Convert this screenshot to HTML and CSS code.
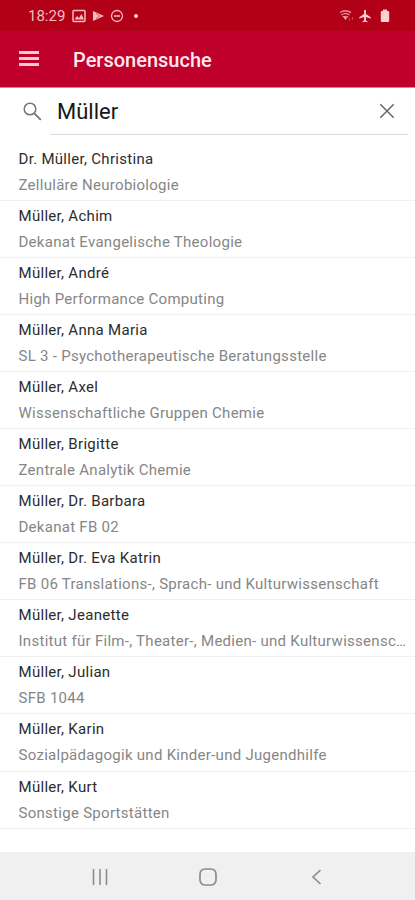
FILE: index.html
```
<!DOCTYPE html>
<html lang="de">
<head>
    <meta charset="UTF-8">
    <meta name="viewport" content="width=device-width, initial-scale=1.0">
    <title>Personensuche</title>
    <link rel="stylesheet" href="styles.css">
</head>
<body>

<div class="status-bar">
    <span class="time">18:29</span>
    <svg class="icon-image" width="14" height="14" viewBox="0 0 14 14">
        <rect x="1" y="1.5" width="12" height="11" rx="1" fill="none" stroke="#f5bcc0" stroke-width="1.5"/>
        <path d="M2.5 10.500l2.500-3.500 2 2 2.500-4 2.500 5.500z" fill="#f5bcc0"/>
    </svg>
    <svg class="icon-play" width="13" height="14" viewBox="0 0 13 14">
        <path d="M1 2v10l11-5z" fill="#f5bcc0"/>
        <path d="M4 4.500l4 2.500-4 2.500" fill="none" stroke="#d4606c"/>
    </svg>
    <svg class="icon-dnd" width="14" height="14" viewBox="0 0 14 14">
        <circle cx="7" cy="7" r="5.500" fill="none" stroke="#f5bcc0" stroke-width="1.300"/>
        <path d="M4 7h6" stroke="#f5bcc0" stroke-width="1.500"/>
    </svg>
    <span class="dot"></span>
    <div class="status-right">
        <svg width="16" height="14" viewBox="0 0 16 14">
            <path d="M1 3.500q5.500-3.500 11 0M2.500 5.800q4-2.800 8 0" fill="none" stroke="#e58c94" stroke-width="1.500"/>
            <path d="M3.500 7h6l-3 4z" fill="#f0aab0"/>
            <path d="M1 2l10 9" stroke="#b90018" stroke-width=".6"/>
            <path d="M10.500 9v3M13.500 11V8" stroke="#c8404e" stroke-width="1.200"/>
        </svg>
        <svg class="icon-plane" width="14" height="14" viewBox="1 1 22 22">
            <path d="M21 16v-2l-7.500-5V3.500a1.500 1.500 0 0 0-3 0V9L3 14v2l7.500-2.500V19l-2.500 1.800V22l4-1 4 1v-1.200L13.500 19v-5.500z" fill="#ffd0d2"/>
        </svg>
        <svg class="icon-battery" width="10" height="14" viewBox="0 0 10 14">
            <path d="M3 .5h4v1.500h1.200q1 0 1 1v9q0 1-1 1H1.800q-1 0-1-1V3q0-1 1-1H3z" fill="#ffd0d2"/>
        </svg>
    </div>
</div>

<div class="header">
    <div class="menu">
        <span></span>
        <span></span>
        <span></span>
    </div>
    <h1>Personensuche</h1>
</div>

<div class="search">
    <svg class="icon-search" width="20" height="20" viewBox="0 0 20 20">
        <circle cx="7" cy="7" r="5.800" fill="none" stroke="#777" stroke-width="1.500"/>
        <path d="M11.300 11.300l6.500 6.500" stroke="#777" stroke-width="1.900"/>
    </svg>
    <div class="search-field">
        <span>Müller</span>
        <svg class="icon-clear" width="16" height="16" viewBox="0 0 16 16">
            <path d="M1.300 1.300l13.400 13.400M14.700 1.300L1.300 14.700" stroke="#666" stroke-width="1.500"/>
        </svg>
    </div>
</div>

<ul class="results">
    <li><p class="name">Dr. Müller, Christina</p><p class="dept">Zelluläre Neurobiologie</p></li>
    <li><p class="name">Müller, Achim</p><p class="dept">Dekanat Evangelische Theologie</p></li>
    <li><p class="name">Müller, André</p><p class="dept">High Performance Computing</p></li>
    <li><p class="name">Müller, Anna Maria</p><p class="dept">SL 3 - Psychotherapeutische Beratungsstelle</p></li>
    <li><p class="name">Müller, Axel</p><p class="dept">Wissenschaftliche Gruppen Chemie</p></li>
    <li><p class="name">Müller, Brigitte</p><p class="dept">Zentrale Analytik Chemie</p></li>
    <li><p class="name">Müller, Dr. Barbara</p><p class="dept">Dekanat FB 02</p></li>
    <li><p class="name">Müller, Dr. Eva Katrin</p><p class="dept">FB 06 Translations-, Sprach- und Kulturwissenschaft</p></li>
    <li><p class="name">Müller, Jeanette</p><p class="dept">Institut für Film-, Theater-, Medien- und Kulturwissensc…</p></li>
    <li><p class="name">Müller, Julian</p><p class="dept">SFB 1044</p></li>
    <li><p class="name">Müller, Karin</p><p class="dept">Sozialpädagogik und Kinder-und Jugendhilfe</p></li>
    <li><p class="name">Müller, Kurt</p><p class="dept">Sonstige Sportstätten</p></li>
</ul>

<div class="nav-bar">
    <svg width="18" height="18" viewBox="0 0 18 18">
        <path d="M2.500 1v16M9 1v16M15.500 1v16" stroke="#8c8c8c" stroke-width="1.600"/>
    </svg>
    <svg width="18" height="18" viewBox="0 0 18 18">
        <rect x="1" y="1" width="16" height="16" rx="5" fill="none" stroke="#8c8c8c" stroke-width="1.700"/>
    </svg>
    <svg width="18" height="18" viewBox="0 0 18 18">
        <path d="M13.500 2L6 9l7.500 7" fill="none" stroke="#8c8c8c" stroke-width="1.700"/>
    </svg>
</div>

</body>
</html>
```
FILE: styles.css
```
body {
    margin: 0;
    height: 900px;
    display: flex;
    flex-direction: column;
    overflow: hidden;
    background: #fff;
    font-family: Roboto, sans-serif;
}
.status-bar {
    height: 31px;
    flex: none;
    box-sizing: border-box;
    padding: 1px 25px 0 28px;
    display: flex;
    align-items: center;
    background: #b20017;
}
.time {
    width: 44px;
    color: #f5bcc0;
    font-size: 15px;
}
.icon-play {
    margin-left: 6px;
}
.icon-dnd {
    margin-left: 5px;
}
.dot {
    width: 4px;
    height: 4px;
    margin-left: 10px;
    border-radius: 50%;
    background: #ffd0d2;
}
.status-right {
    margin-left: auto;
    display: flex;
}
.icon-plane {
    margin-left: 3px;
}
.icon-battery {
    margin-left: 8px;
}
.header {
    height: 57px;
    flex: none;
    box-sizing: border-box;
    padding: 0 19px 1px;
    display: flex;
    align-items: center;
    background: #be002a;
    border-bottom: 1px solid #d98296;
}
.menu {
    width: 20px;
    display: flex;
    flex-direction: column;
    gap: 3px;
}
.menu span {
    height: 3px;
    background: #f6cbd4;
}
.header h1 {
    margin: 3px 0 0 34px;
    color: #ffe8ec;
    font-size: 20px;
    font-weight: 500;
}
.search {
    height: 47px;
    flex: none;
    display: flex;
    padding: 0 7px 0 23px;
}
.icon-search {
    margin-top: 14px;
}
.search-field {
    flex: 1;
    display: flex;
    align-items: center;
    justify-content: space-between;
    margin-left: 7px;
    padding: 0 13px 0 7px;
    border-bottom: 1px solid #dcdcdc;
    color: #161616;
    font-size: 22px;
}
.results {
    flex: 1;
    margin: 0;
    padding: 9px 0 0;
    list-style: none;
}
.results li {
    height: 57.05px;
    box-sizing: border-box;
    padding: 5px 0 0 18.5px;
    border-bottom: 1px solid #f1f1f1;
}
.results p {
    margin: 0;
    white-space: nowrap;
    font-size: 15px;
    line-height: 20px;
    letter-spacing: 0.3px;
}
.name {
    color: #2c2c2c;
}
.results .dept {
    margin-top: 6px;
    color: #868686;
    letter-spacing: 0.28px;
}
.nav-bar {
    height: 48px;
    flex: none;
    box-sizing: border-box;
    padding: 2px 90px 0 91px;
    display: flex;
    align-items: center;
    justify-content: space-between;
    background: #f0f0f0;
}
```
